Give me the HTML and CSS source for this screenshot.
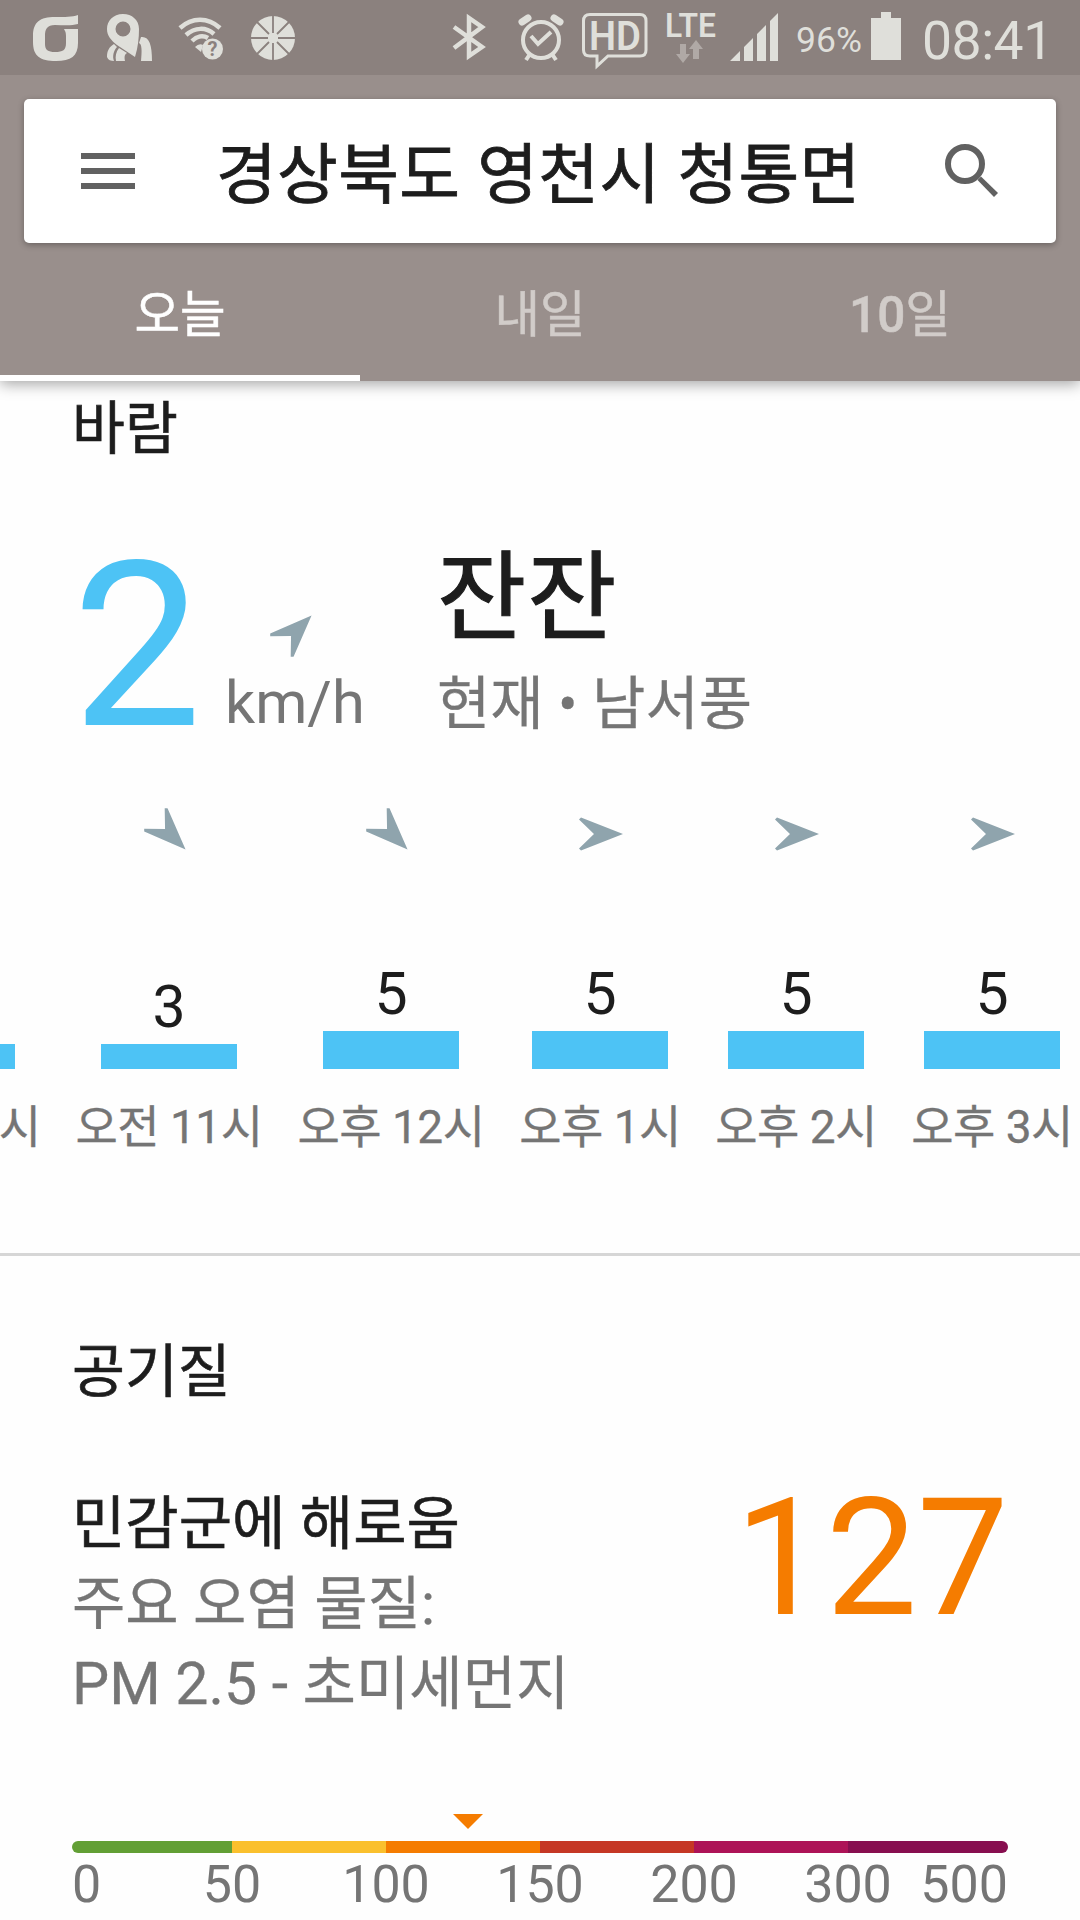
FILE: index.html
```html
<!DOCTYPE html>
<html lang="ko">
<head>
    <meta charset="UTF-8">
    <title>날씨 - 경상북도 영천시 청통면</title>
    <link rel="stylesheet" href="styles.css">
</head>
<body>

    <!-- Arrow shape shared by every wind direction -->
    <svg class="defs" width="0" height="0">
        <symbol id="arrow" viewBox="-30 -30 60 60">
            <path d="M22 0 -20 16.5 -22 14.5 -7 0 -22 -14.5 -20 -16.5Z"/>
        </symbol>
    </svg>

    <!-- Header -->
    <div class="header">
        <div class="status-bar">
            <div class="status-left">
                <svg width="46" height="48" viewBox="0 0 46 48">
                    <path fill-rule="evenodd" d="M45 1V10C38 12 30 11 22 11C14 11 12 15 12 22V30C12 36 15 38 22 38C30 38 33 36 33 29V22C33 18 32 17 31 15H45V29C45 42 38 47 23 47C7 47 0 42 0 28V22C0 8 7 3 22 3C32 3 39 3 45 1Z"/>
                </svg>
                <svg width="46" height="48" viewBox="0 0 46 48">
                    <path fill-rule="evenodd" d="M18 0C8 0 2 7 2 15C2 22 6 26 12 31L30 43C33 33 34 24 34 15C34 6 27 0 18 0ZM18 7.500A7.500 7.500 0 1 1 18 22.500A7.500 7.500 0 1 1 18 7.500Z"/>
                    <path d="M36 23C44 22 47 30 47 47H36C37 37 37 30 34 29ZM9 30C4 33 2 37 2 43C3 46 6 47 9 47C7 42 9 36 12 33ZM14 34C11 38 10 42 11 47H20C19 42 20 40 22 39Z"/>
                </svg>
                <svg width="46" height="48" viewBox="0 0 46 48">
                    <g fill="none" stroke="#dfdfda" stroke-width="4.500">
                        <path d="M3 14C15 3 31 3 43 14M9 21C18 13 29 13 37 20M15 27C20 22 26 21 31 24"/>
                    </g>
                    <path d="M18 33Q22 29 26 31L24 38Z"/>
                    <circle cx="35.500" cy="35" r="10.500"/>
                    <text class="glyph" x="35.500" y="42" font-size="20" text-anchor="middle">?</text>
                </svg>
                <svg width="46" height="48" viewBox="0 0 46 48">
                    <circle cx="24" cy="24" r="22"/>
                    <g class="cut" stroke-width="1.800">
                        <path d="M24 1V19M24 29V47M1 24H19M29 24H47M8 8 20 20M28 28 40 40M40 8 28 20M20 28 8 40"/>
                    </g>
                </svg>
            </div>
            <div class="status-right">
                <svg class="bluetooth" width="36" height="50" viewBox="0 0 36 50">
                    <path class="line" stroke-width="4.500" d="M2 14 30 34 17 43V5L30 14 2 35"/>
                </svg>
                <svg class="alarm" width="46" height="50" viewBox="0 0 46 50">
                    <circle class="line" stroke-width="4" cx="23" cy="27" r="18"/>
                    <path class="line" stroke-width="4" d="M13 23 20 31 33 19M12 41 8 47M34 41 38 47"/>
                    <path class="line" stroke-width="7" stroke-linecap="round" d="M4 9 10 5M42 9 36 5"/>
                </svg>
                <svg class="hd" width="66" height="56" viewBox="0 0 66 56">
                    <path class="line" stroke-width="3" d="M8 1.500H58Q64 1.500 64 8V37Q64 43 58 43H26L15 53V43H8Q1.500 43 1.500 37V8Q1.500 1.500 8 1.500Z"/>
                    <text x="7" y="37" font-size="41" font-weight="600" textLength="52" lengthAdjust="spacingAndGlyphs">HD</text>
                </svg>
                <svg class="lte" width="54" height="52" viewBox="-1 0 54 52">
                    <text x="0" y="24" font-size="33" font-weight="600" textLength="51" lengthAdjust="spacingAndGlyphs">LTE</text>
                    <path class="dim" d="M15 31H21V41H25L18 50 11 41H15ZM28 46H34V36H38L31 27 24 36H28Z"/>
                </svg>
                <svg class="signal" width="48" height="48" viewBox="0 0 48 48">
                    <path d="M0 48 10 38V48ZM14 48V34L23 25V48ZM27 48V21L36 12V48ZM40 48V8L48 0V48Z"/>
                </svg>
                <span class="percent">96%</span>
                <svg class="battery" width="30" height="48" viewBox="0 0 30 48">
                    <path d="M10 0H20V6H30V48H0V6H10Z"/>
                </svg>
                <span class="clock">08:41</span>
            </div>
        </div>

        <div class="search-bar">
            <svg width="54" height="36" viewBox="0 0 54 36">
                <path d="M0 0H54V6H0ZM0 15H54V21H0ZM0 30H54V36H0Z"/>
            </svg>
            <div class="location">경상북도 영천시 청통면</div>
            <svg width="54" height="54" viewBox="0 0 54 54">
                <circle cx="20" cy="20" r="17" fill="none" stroke="#616161" stroke-width="6"/>
                <path d="M32.500 36 36 32.500 53 49 49 53Z"/>
            </svg>
        </div>

        <div class="tabs">
            <div class="tab active">오늘</div>
            <div class="tab">내일</div>
            <div class="tab"><span class="num">10</span>일</div>
        </div>
    </div>

    <!-- Wind -->
    <div class="wind">
        <div class="section-title">바람</div>
        <div class="current">
            <div class="speed">2</div>
            <div class="unit">
                <svg class="arrow ne"><use href="#arrow"/></svg>
                <div class="unit-name">km/h</div>
            </div>
            <div class="condition">
                <div class="condition-name">잔잔</div>
                <div class="condition-detail">현재 • 남서풍</div>
            </div>
        </div>

        <div class="hours">
            <div class="hour">
                <svg class="arrow se"><use href="#arrow"/></svg>
                <div class="bar-area"><div class="bar"></div></div>
                <div class="time">오전 10시</div>
            </div>
            <div class="hour">
                <svg class="arrow se"><use href="#arrow"/></svg>
                <div class="bar-area"><div class="value">3</div><div class="bar"></div></div>
                <div class="time">오전 11시</div>
            </div>
            <div class="hour">
                <svg class="arrow se"><use href="#arrow"/></svg>
                <div class="bar-area"><div class="value">5</div><div class="bar tall"></div></div>
                <div class="time">오후 12시</div>
            </div>
            <div class="hour short">
                <svg class="arrow"><use href="#arrow"/></svg>
                <div class="bar-area"><div class="value">5</div><div class="bar tall"></div></div>
                <div class="time">오후 1시</div>
            </div>
            <div class="hour short">
                <svg class="arrow"><use href="#arrow"/></svg>
                <div class="bar-area"><div class="value">5</div><div class="bar tall"></div></div>
                <div class="time">오후 2시</div>
            </div>
            <div class="hour short">
                <svg class="arrow"><use href="#arrow"/></svg>
                <div class="bar-area"><div class="value">5</div><div class="bar tall"></div></div>
                <div class="time">오후 3시</div>
            </div>
        </div>
    </div>

    <!-- Air quality -->
    <div class="air">
        <div class="section-title">공기질</div>
        <div class="air-info">
            <div class="air-text">
                <div class="air-level">민감군에 해로움</div>
                <div>주요 오염 물질:</div>
                <div><span class="pollutant">PM 2.5 -</span> 초미세먼지</div>
            </div>
            <div class="air-index">127</div>
        </div>
        <div class="marker"></div>
        <div class="scale">
            <div class="good"></div>
            <div class="moderate"></div>
            <div class="sensitive"></div>
            <div class="unhealthy"></div>
            <div class="very-unhealthy"></div>
            <div class="hazardous"></div>
        </div>
        <div class="scale-labels">
            <span class="first">0</span>
            <span>50</span>
            <span>100</span>
            <span>150</span>
            <span>200</span>
            <span>300</span>
            <span class="last">500</span>
        </div>
    </div>
</body>
</html>
```
FILE: styles.css
```css
* {
    box-sizing: border-box;
}

body {
    font-family: Roboto, "Noto Sans CJK KR", sans-serif;
    background-color: #fefefe;
    color: #1d1d1d;
    margin: 0;
    width: 1080px;
    height: 1920px;
    overflow: hidden;
    white-space: nowrap;
}

svg {
    display: block;
    flex: none;
    overflow: visible;
}

.defs {
    position: absolute;
}

/* Header */
.header {
    position: relative;
    z-index: 1;
    height: 381px;
    background-color: #998f8c;
    box-shadow: 0 3px 14px rgba(0,0,0,0.36);
}

.status-bar {
    display: flex;
    justify-content: space-between;
    height: 75px;
    padding: 0 34px 0 33px;
    background-color: #8b817e;
    color: #dfdfda;
    fill: #dfdfda;
}

.status-left {
    display: flex;
    gap: 26px;
    padding-top: 14px;
}

.status-right {
    display: flex;
    padding-top: 13px;
}

.line {
    fill: none;
    stroke: #dfdfda;
}

.cut {
    fill: none;
    stroke: #8b817e;
}

.glyph {
    fill: #8b817e;
    font-weight: 700;
}

.dim {
    fill: #b0a9a6;
}

.alarm {
    margin-left: 30px;
}

.hd {
    margin-left: 18px;
}

.lte {
    margin-left: 16px;
}

.signal {
    margin-left: 12px;
}

.percent {
    width: 75px;
    padding-left: 18px;
    margin-right: 18px;
    font-size: 35.5px;
    line-height: 54px;
}

.battery {
    margin-top: -1px;
}

.clock {
    width: 124px;
    margin-left: 21px;
    font-size: 53.5px;
    letter-spacing: -0.5px;
    line-height: 56px;
}

.search-bar {
    display: flex;
    align-items: center;
    height: 144px;
    margin: 24px 24px 0;
    padding: 0 57px;
    background-color: #fff;
    border-radius: 5px;
    box-shadow: 0 2px 6px rgba(0,0,0,0.3);
    fill: #616161;
}

.location {
    flex: 1;
    padding: 10px 0 0 81px;
    font-size: 66px;
    letter-spacing: 0.4px;
    line-height: 134px;
    -webkit-text-stroke: 0.8px;
}

.tabs {
    display: flex;
    height: 138px;
}

.tab {
    flex: 1;
    padding-top: 13px;
    border-bottom: 6px solid transparent;
    color: #d1ccc9;
    font-size: 49.5px;
    line-height: 119px;
    text-align: center;
    -webkit-text-stroke: 0.5px;
}

.tab.active {
    color: #fff;
    border-bottom-color: #fff;
}

.num {
    font-weight: 500;
}

/* Wind */
.section-title {
    font-size: 57.5px;
    line-height: 81px;
    margin-bottom: -1px;
    -webkit-text-stroke: 0.6px;
}

.wind {
    height: 875px;
    padding-top: 8px;
    border-bottom: 3px solid #d6d6d6;
}

.wind .section-title {
    padding-left: 72px;
}

.current {
    display: flex;
    height: 200px;
    margin-top: 77px;
    padding-left: 72px;
    color: #757575;
    font-size: 58px;
    line-height: 80px;
}

.speed {
    width: 153px;
    color: #4dc3f5;
    font-size: 231px;
    line-height: 200px;
}

.unit {
    width: 212px;
    padding-top: 55px;
}

.unit-name {
    font-size: 59.5px;
    line-height: 82px;
}

.unit .arrow {
    margin: 0 0 1px 41px;
}

.arrow {
    width: 60px;
    height: 60px;
    fill: #8fa4ad;
}

.ne {
    transform: rotate(-45deg);
}

.se {
    transform: rotate(45deg);
}

.condition-name {
    color: #1d1d1d;
    font-size: 97px;
    letter-spacing: 1px;
    line-height: 102px;
    margin: 1px 0 15px;
    -webkit-text-stroke: 1.2px;
}

.condition-detail {
    -webkit-text-stroke: 0.3px;
}

.hours {
    display: flex;
    margin: 58px 0 0 -164px;
}

.hour {
    display: flex;
    flex: none;
    flex-direction: column;
    align-items: center;
    width: 222px;
}

.hour .arrow {
    margin-left: 2px;
}

.hour.short {
    width: 196px;
}

.bar-area {
    display: flex;
    flex-direction: column;
    justify-content: flex-end;
    align-items: center;
    height: 205px;
}

.value {
    margin-bottom: 7px;
    font-size: 59px;
    line-height: 60px;
}

.bar {
    width: 136px;
    height: 25px;
    background-color: #4dc3f5;
}

.bar.tall {
    height: 38px;
}

.time {
    margin-top: 28px;
    color: #757575;
    font-size: 46px;
    letter-spacing: -0.5px;
    line-height: 60px;
    -webkit-text-stroke: 0.3px;
}

/* Air quality */
.air {
    padding: 76px 72px 0;
}

.air-info {
    display: flex;
    justify-content: space-between;
    margin-top: 72px;
    color: #757575;
    font-size: 58px;
    line-height: 80px;
}

.air-text {
    -webkit-text-stroke: 0.3px;
}

.air-level {
    color: #1d1d1d;
    padding-top: 1px;
    line-height: 79px;
    -webkit-text-stroke: 0.6px;
}

.pollutant {
    font-size: 59px;
}

.air-index {
    color: #f57c00;
    font-size: 163px;
    letter-spacing: -0.5px;
    line-height: 149px;
}

.marker {
    width: 30px;
    height: 15px;
    margin: 90px 0 12px 381px;
    background-color: #f57c00;
    clip-path: polygon(0 0, 100% 0, 50% 100%);
}

.scale {
    display: grid;
    grid-template-columns: 160px 154px 154px 154px 154px 160px;
    height: 12px;
    border-radius: 6px;
    overflow: hidden;
}

.good {
    background-color: #629f35;
}

.moderate {
    background-color: #fac02d;
}

.sensitive {
    background-color: #f57c00;
}

.unhealthy {
    background-color: #c53725;
}

.very-unhealthy {
    background-color: #ad1357;
}

.hazardous {
    background-color: #870e4f;
}

.scale-labels {
    display: grid;
    grid-template-columns: 83px repeat(5, 154px) 83px;
    justify-items: center;
    color: #757575;
    font-size: 52px;
    line-height: 64px;
}

.first {
    justify-self: start;
}

.last {
    justify-self: end;
}
```
